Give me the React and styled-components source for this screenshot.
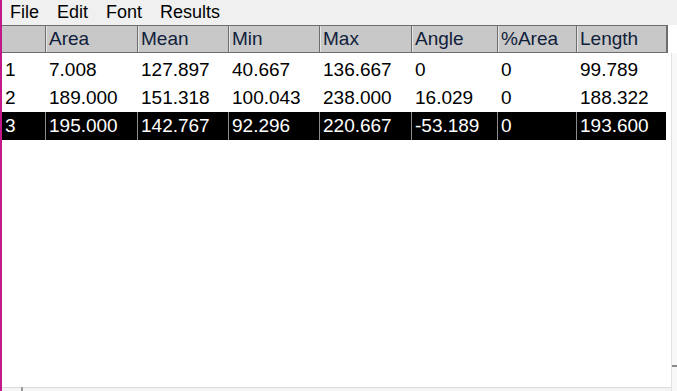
import React from 'react';
import styled, { createGlobalStyle } from 'styled-components';

const Global = createGlobalStyle`
  html, body { margin: 0; padding: 0; background: #fff; }
  body { font-family: "Liberation Sans", Arial, sans-serif; }
`;

const cols = '45px 92px 91px 91px 92px 86px 79px 90px';
const headers = ['', 'Area', 'Mean', 'Min', 'Max', 'Angle', '%Area', 'Length'];
const rows = [
  ['1', '7.008', '127.897', '40.667', '136.667', '0', '0', '99.789'],
  ['2', '189.000', '151.318', '100.043', '238.000', '16.029', '0', '188.322'],
  ['3', '195.000', '142.767', '92.296', '220.667', '-53.189', '0', '193.600'],
];

const Window = styled.div`
  width: 677px;
  height: 391px;
  display: flex;
  flex-direction: column;
  border-left: 2px solid #c2188a;
  box-sizing: border-box;
  overflow: hidden;
`;

const MenuBar = styled.div`
  height: 25px;
  background: #f0f0f0;
  display: flex;
  align-items: center;
  padding-left: 8px;
  gap: 18px;
  font-size: 18px;
  color: #000;
`;

const Body = styled.div`
  flex: 1;
  display: flex;
`;

const TableArea = styled.div`
  flex: 1;
  display: flex;
  flex-direction: column;
`;

const Grid = styled.div`
  display: grid;
  grid-template-columns: ${cols};
`;

const HeaderRow = styled(Grid)`
  height: 28px;
  background: #c8c8c8;
  border-top: 1px solid #6e6e6e;
  border-bottom: 1px solid #6e6e6e;
  box-sizing: border-box;
  margin-left: -2px;
  margin-bottom: 3px;
  width: 668px;
  border-right: 2px solid #6e6e6e;
`;

const HeadCell = styled.div`
  font-size: 19px;
  line-height: 26px;
  padding-left: 3px;
  color: #10203a;
  border-left: ${p => (p.$first ? 'none' : '1px solid #6e6e6e')};
  box-shadow: ${p => (p.$first ? 'none' : 'inset 1px 0 #e6e6e6')};
  white-space: nowrap;
  overflow: hidden;
`;

const Row = styled(Grid)`
  height: 28px;
  margin-left: -2px;
  width: 666px;
  background: ${p => (p.$selected ? '#000' : '#fff')};
  color: ${p => (p.$selected ? '#fff' : '#000')};
`;

const Cell = styled.div`
  font-size: 19px;
  line-height: 28px;
  padding-left: ${p => (p.$first ? '5px' : '3px')};
  border-left: ${p => (p.$first ? 'none' : p.$selected ? '1px solid #8c8c8c' : '1px solid transparent')};
  white-space: nowrap;
  overflow: hidden;
`;

const Filler = styled.div`
  flex: 1;
`;

const HScroll = styled.div`
  height: 3px;
  border-top: 1px solid #dcdcdc;
  background: #f4f4f4;
  position: relative;
`;

const Thumb = styled.span`
  position: absolute;
  left: 19px;
  top: -1px;
  width: 2px;
  height: 4px;
  background: #9a9a9a;
`;

const VScroll = styled.div`
  width: 5px;
  margin-top: 28px;
  border-left: 1px solid #e2e2e2;
  background: #f8f8f8;
  position: relative;
`;

const VTick = styled.span`
  position: absolute;
  left: 0;
  bottom: 24px;
  width: 5px;
  height: 2px;
  background: #8a8a8a;
`;

export default function App() {
  return (
    <>
      <Global />
      <Window>
        <MenuBar>
          <span>File</span>
          <span>Edit</span>
          <span>Font</span>
          <span>Results</span>
        </MenuBar>
        <Body>
          <TableArea>
            <HeaderRow>
              {headers.map((h, i) => (
                <HeadCell key={i} $first={i === 0}>{h}</HeadCell>
              ))}
            </HeaderRow>
            {rows.map((r, ri) => {
              const sel = ri === 2;
              return (
                <Row key={ri} $selected={sel}>
                  {r.map((v, ci) => (
                    <Cell key={ci} $first={ci === 0} $selected={sel}>{v}</Cell>
                  ))}
                </Row>
              );
            })}
            <Filler />
            <HScroll><Thumb /></HScroll>
          </TableArea>
          <VScroll><VTick /></VScroll>
        </Body>
      </Window>
    </>
  );
}
